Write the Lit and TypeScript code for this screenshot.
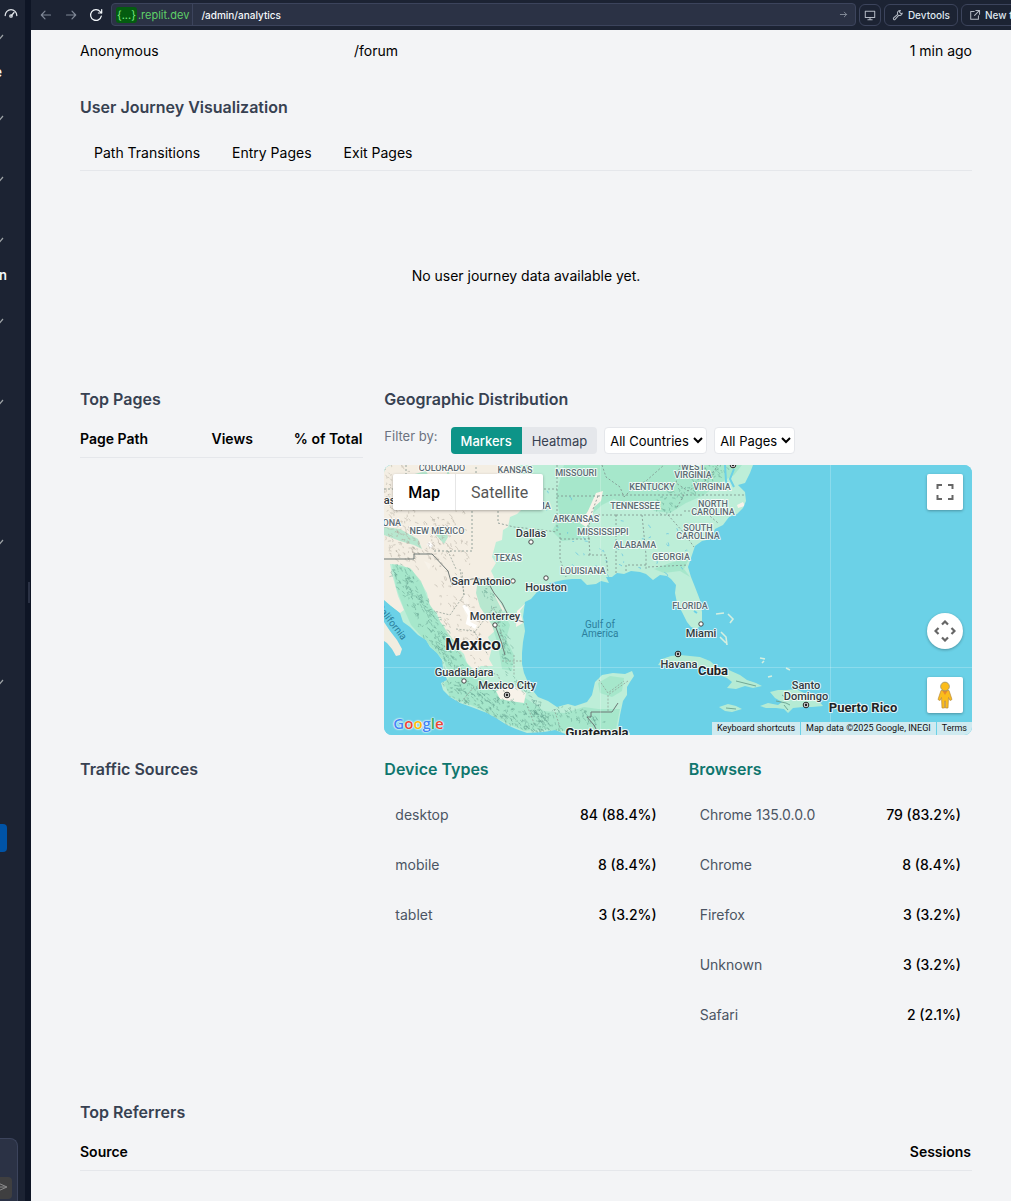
import { LitElement, html, css, svg } from "lit";
import { customElement, property, state } from "lit/decorators.js";
import { classMap } from "lit/directives/class-map.js";

/* ---------- map data ---------- */

type Kind = "state" | "city" | "country" | "water";
interface Label { x: number; y: number; t: string; k: Kind; r?: number }

const LABELS: Label[] = [
  { x: 58, y: 6, t: "COLORADO", k: "state" },
  { x: 131, y: 8, t: "KANSAS", k: "state" },
  { x: 192, y: 11, t: "MISSOURI", k: "state" },
  { x: 309, y: 5, t: "WEST", k: "state" },
  { x: 309, y: 13, t: "VIRGINIA", k: "state" },
  { x: 268, y: 25, t: "KENTUCKY", k: "state" },
  { x: 328, y: 25, t: "VIRGINIA", k: "state" },
  { x: 251, y: 44, t: "TENNESSEE", k: "state" },
  { x: 329, y: 42, t: "NORTH", k: "state" },
  { x: 329, y: 50, t: "CAROLINA", k: "state" },
  { x: 142, y: 44, t: "OKLAHOMA", k: "state" },
  { x: 192, y: 57, t: "ARKANSAS", k: "state" },
  { x: 314, y: 66, t: "SOUTH", k: "state" },
  { x: 314, y: 74, t: "CAROLINA", k: "state" },
  { x: -2, y: 61, t: "ARIZONA", k: "state" },
  { x: 53, y: 69, t: "NEW MEXICO", k: "state" },
  { x: 219, y: 70, t: "MISSISSIPPI", k: "state" },
  { x: 251, y: 83, t: "ALABAMA", k: "state" },
  { x: 287, y: 95, t: "GEORGIA", k: "state" },
  { x: 124, y: 96, t: "TEXAS", k: "state" },
  { x: 199, y: 109, t: "LOUISIANA", k: "state" },
  { x: 306, y: 144, t: "FLORIDA", k: "state" },
  { x: -14, y: 39, t: "Las Vegas", k: "city" },
  { x: 147, y: 72, t: "Dallas", k: "city" },
  { x: 97, y: 120, t: "San Antonio", k: "city" },
  { x: 162, y: 126, t: "Houston", k: "city" },
  { x: 111, y: 155, t: "Monterrey", k: "city" },
  { x: 317, y: 172, t: "Miami", k: "city" },
  { x: 295, y: 203, t: "Havana", k: "city" },
  { x: 80, y: 211, t: "Guadalajara", k: "city" },
  { x: 123, y: 224, t: "Mexico City", k: "city" },
  { x: 422, y: 224, t: "Santo", k: "city" },
  { x: 422, y: 235, t: "Domingo", k: "city" },
  { x: 89, y: 185, t: "Mexico", k: "country" },
  { x: 329, y: 210, t: "Cuba", k: "country" },
  { x: 479, y: 247, t: "Puerto Rico", k: "country" },
  { x: 213, y: 272, t: "Guatemala", k: "country" },
  { x: 216, y: 163, t: "Gulf of", k: "water" },
  { x: 216, y: 172, t: "America", k: "water" },
  { x: -5, y: 146, t: "Gulf of California", k: "water", r: 52 },
];

const TOWNS = [[147, 77], [129, 116], [162, 113], [111, 160], [317, 159], [80, 216]];
const CAPITALS = [[123, 230], [294, 189], [422, 240], [349, 0]];

const LAND =
  "M0 0H369L366 8 361 18 354 20 361 27 362 36 359 43 353 49 345 52 339 60 331 64 327 74 318 76 311 81 308 90 304 102 307 112 311 122 316 135 318 147 318 160 312 164 307 162 303 157 298 147 293 138 291 128 292 120 287 114 283 111 276 110 269 115 262 109 256 107 247 106 240 109 233 108 228 112 222 112 225 118 217 116 212 119 203 120 197 114 188 114 179 115 166 118 160 123 153 127 147 134 141 137 139 152 141 166 139 177 138 188 138 199 140 208 146 222 154 232 164 236 173 242 184 239 191 241 203 237 208 230 211 217 218 210 229 208 241 209 248 206 250 211 246 217 243 222 243 230 239 236 236 250 234 262 246 268 246 270H184L171 265 160 267 143 268 132 264 123 260 112 253 103 248 90 243 76 238 66 232 59 225 57 218 63 215 59 204 58 195 53 188 46 182 42 175 34 170 26 162 19 157 16 148 7 141 0 135Z";
const ARID =
  "M0 0H132L137 14 142 22 140 42 133 49 126 52 124 62 119 65 118 75 112 77 108 92 112 98 107 106 110 112 106 123 113 133 120 144 118 151 109 152 112 165 104 172 108 183 105 194 109 201 97 201 90 205 83 198 80 189 73 182 70 175 63 171 60 161 56 157 53 148 46 141 43 128 38 119 32 111 28 105 17 100 6 99 8 109 11 120 14 131 20 145 16 148 7 141 0 135Z";
const DEEP = [
  "M180 0H300L330 0 358 0 350 10 336 18 320 30 302 38 286 48 270 46 262 36 244 40 230 34 218 40 205 52 196 74 178 76 168 66 176 52 172 30Z",
  "M8 99 26 103 37 116 45 138 57 158 70 176 82 197 93 212 112 222 130 226 146 236 160 246 180 248 200 242 214 244 236 244 232 264 214 268 180 266 158 264 140 266 118 256 92 242 66 232 60 218 66 212 60 196 46 181 27 160 20 144 12 122Z",
  "M94 115 106 112 108 125 118 145 126 160 122 174 130 190 128 206 118 204 114 180 108 160 96 142 92 128Z",
  "M27 10 42 6 48 16 60 20 64 4 68 18 58 30 44 22Z",
  "M0 62 16 64 34 74 38 84 30 80 16 76 0 70Z",
  "M52 70 60 62 64 72 60 79Z",
  "M214 218 226 211 240 213 238 226 228 232 216 228Z",
  "M236 118 252 108 262 112 250 116ZM306 92 300 104 306 112 296 106 280 108 270 104 286 98Z",
];
const SAND = [
  "M212 28 219 26 217 36 210 42 208 54 202 62 196 58 204 46Z",
  "M40 96 47 99 45 105ZM80 130 84 130 86 148 96 152 92 166 86 160 80 146Z",
  "M112 226 128 220 142 228 140 238 126 236 116 234Z",
  "M353 40 359 37 361 41 354 43Z",
  "M142 138 136 146 139 158 132 162 133 146Z",
];
const BAJA = "M0 157 6 166 13 175 18 184 16 190 12 191 8 184 3 178 0 176Z";
const ISLANDS = [
  "M274 200 278 194 287 191 296 190 316 192 326 196 333 202 339 202 347 206 356 210 363 215 372 218 378 221 369 223 361 221 352 224 343 223 348 217 343 213 333 209 322 203 306 200 297 197 289 202 281 201Z",
  "M376 241 384 238 394 240 398 237 391 233 386 227 394 225 403 225 412 224 420 228 429 228 434 235 439 241 428 242 419 242 409 243 404 248 400 244 392 243 382 243Z",
  "M335 242 344 239 352 241 358 244 348 247 341 246Z",
  "M450 243 462 240 474 243 464 246Z",
];
const CAYS = "M332 149 340 148M344 149 349 154 346 158M337 167 342 172 343 180M336 172 342 178M376 193 381 194M378 198 380 196M384 212 388 211M402 203 406 205";

const STATE_LINES =
  "M0 24H22M22 0V38M22 22H92V0M92 24H173M88 22V86H50V88M114 26V58L130 62 150 64 173 67M92 26H114M173 0V24 67M173 31H214M176 68V94L182 112M176 74H206M218 0 222 12 236 22 240 32 M214 31 230 30 300 30H362M240 32 250 22 262 16 280 0M214 31 206 52 204 74M206 90 204 60M232 50V108M232 50H214M258 50 262 90V104M232 50H300M262 100H242V108M264 102 304 100M284 50 300 68 310 82M300 46 320 46 334 58M300 30 292 44M296 0 292 18 304 26 324 14 334 0M204 90H222L224 108";
const MEX_LINES =
  "M64 86 72 104M76 104 80 130 66 150 50 146M80 130 78 106M110 142 90 168M112 150 120 178M118 196 138 196M72 164 90 166 104 190M96 204 114 210 122 232M130 190V210M170 244 176 262M213 212 224 228 240 216M244 216 224 230 224 246M142 238 150 258M90 222 78 236";
const BORDER = "M0 94H30V89H48L64 106 68 120 88 114H102L110 128 118 138 124 150 136 156 144 158M234 238 228 247H207V252H203L210 260 214 268M111 160 117 176 121 190";

/* Small seeded generator, so the relief hatching is the same on every render. */
function hatch(seed: number, n: number, spine: number[][], spread: number): string {
  let s = seed;
  const rnd = () => ((s = (s * 16807) % 2147483647) / 2147483647);
  let d = "";
  for (let i = 0; i < n; i++) {
    const k = Math.floor(rnd() * (spine.length - 1));
    const f = rnd();
    const x = spine[k][0] + (spine[k + 1][0] - spine[k][0]) * f + (rnd() - 0.5) * spread;
    const y = spine[k][1] + (spine[k + 1][1] - spine[k][1]) * f + (rnd() - 0.5) * spread;
    d += `M${x.toFixed(1)} ${y.toFixed(1)}l${(rnd() * 3).toFixed(1)} ${(rnd() * 4 - 1).toFixed(1)}l${(rnd() * 2 - 1).toFixed(1)} ${(rnd() * 2).toFixed(1)}`;
  }
  return d;
}
const RIDGES =
  hatch(7, 230, [[14, 104], [30, 130], [50, 165], [70, 200]], 19) +
  hatch(19, 300, [[66, 222], [100, 236], [140, 254], [168, 256]], 22) +
  hatch(31, 110, [[100, 118], [112, 150], [122, 180], [120, 200], [148, 236], [160, 256]], 9) +
  hatch(43, 90, [[270, 45], [310, 20], [340, 0]], 15) +
  hatch(51, 50, [[170, 246], [200, 250], [215, 262]], 12);
const DUST =
  hatch(77, 190, [[6, 10], [20, 40], [10, 80], [50, 90]], 28) +
  hatch(83, 150, [[36, 80], [66, 60], [70, 130], [90, 190]], 36);
const RIVERS = hatch(91, 40, [[160, 30], [200, 90], [260, 80], [300, 90]], 50);

@customElement("geo-map")
class GeoMap extends LitElement {
  @state() private layer = "Map";

  static styles = css`
    :host { display: block; }
    .map { position: relative; height: 270px; overflow: hidden; border-radius: 8px; background: #6bd1e7; font-family: Roboto, sans-serif; }
    .art { display: block; width: 100%; height: 100%; }
    .state { font: 500 9px Roboto, sans-serif; fill: #5c6b73; }
    .city { font: 500 11px Roboto, sans-serif; fill: #333a40; }
    .country { font: 700 13px Roboto, sans-serif; fill: #1d2226; }
    .water { font: 400 10px Roboto, sans-serif; fill: #2b7f9c; }
    .halo { paint-order: stroke; stroke: #fff; stroke-width: 2; stroke-opacity: 0.8; stroke-linejoin: round; }
    .mexico { font-size: 17px; }
    .types { position: absolute; left: 9px; top: 9px; display: flex; background: #fff; border-radius: 2px; box-shadow: 0 1px 3px rgba(0, 0, 0, 0.3); }
    .type { height: 36px; padding: 0 15px; border: 0; background: none; color: #565656; font: 400 16px Roboto, sans-serif; }
    .type + .type { border-left: 1px solid #e6e6e6; }
    .type.on { color: #000; font-weight: 500; }
    .ctl { position: absolute; right: 9px; width: 36px; height: 36px; padding: 0; border: 0; border-radius: 2px; background: #fff; display: grid; place-items: center; box-shadow: 0 1px 3px rgba(0, 0, 0, 0.3); }
    .full { top: 9px; }
    .pan { bottom: 86px; border-radius: 50%; }
    .man { bottom: 22px; }
    .legal { position: absolute; right: 0; bottom: 0; display: flex; gap: 1px; font-size: 9px; line-height: 13px; color: #111; }
    .legal > * { padding: 0 5px; background: rgba(232, 240, 242, 0.8); color: inherit; text-decoration: none; border: 0; font: inherit; }
    .google { position: absolute; left: 9px; bottom: 1px; font: 600 15px/22px "Open Sans", sans-serif; text-decoration: none; text-shadow: 0 0 1px #fff, 0 0 2px #fff, 0 0 2px #fff; }
    .b { color: #4285f4; } .r { color: #ea4335; } .y { color: #fbbc04; } .g { color: #34a853; }
  `;

  private label(l: Label) {
    const cls = `${l.k}${l.k === "water" ? "" : " halo"}${l.t === "Mexico" ? " mexico" : ""}`;
    return svg`<text class=${cls} x=${l.x} y=${l.y} text-anchor="middle"
      transform=${`rotate(${l.r ?? 0} ${l.x} ${l.y})`}>${l.t}</text>`;
  }

  render() {
    return html`<div class="map">
      <svg class="art" viewBox="0 0 588 270" preserveAspectRatio="xMinYMin slice" role="img" aria-label="Map">
        <defs><clipPath id="land"><path d=${LAND}></path></clipPath></defs>
        <rect width="588" height="270" fill="#6bd1e7"></rect>
        <path d=${LAND} fill="#bdeed8"></path>
        <g clip-path="url(#land)">
          <path d=${ARID} fill="#f4eee3"></path>
          ${DEEP.map((d) => svg`<path d=${d} fill="#9ce4c6" fill-opacity="0.7"></path>`)}
          ${SAND.map((d) => svg`<path d=${d} fill="#f7f2e9"></path>`)}
          <path d="M80 140 86 150 84 158 92 162M44 78 48 82" stroke="#fff" stroke-width="4" fill="none"></path>
          <path d=${DUST} stroke="#b3aca0" stroke-width="0.5" fill="none"></path>
          <path d=${RIDGES} stroke="#5f9a8a" stroke-width="0.6" stroke-opacity="0.7" fill="none"></path>
          <path d=${RIVERS} stroke="#62c3e2" stroke-width="0.7" fill="none"></path>
          <path d=${STATE_LINES} stroke="#7d8f8b" stroke-width="0.8" stroke-dasharray="2 2" fill="none"></path>
          <path d=${MEX_LINES} stroke="#8c9a90" stroke-width="0.7" stroke-dasharray="2 1.5" fill="none"></path>
          <path d=${BORDER} stroke="#6d7775" stroke-width="1" fill="none"></path>
          <path d="M341 0 342 16 344 22M350 4 346 14 350 22 M310 146 313 148" stroke="#6bd1e7" stroke-width="2" fill="none"></path>
        </g>
        <path d=${BAJA} fill="#f1ede0"></path>
        ${ISLANDS.map((d) => svg`<path d=${d} fill="#b5ebd4"></path>`)}
        <path d="M352 216 372 221M392 236 402 238 406 240M398 230 404 234M400 240 404 245M342 243 352 244" stroke="#6aa08f" stroke-width="0.9" fill="none"></path>
        <path d=${CAYS} stroke="#d5efe0" stroke-width="1.6" fill="none"></path>
        <path d="M216.500 0V270M446.500 0V270M0 202.500H588" stroke="#fff" stroke-opacity="0.22" fill="none"></path>
        ${TOWNS.map(([x, y]) => svg`<circle cx=${x} cy=${y} r="2.200" fill="#fff" stroke="#444" stroke-width="1"></circle>`)}
        ${CAPITALS.map(([x, y]) => svg`<circle cx=${x} cy=${y} r="2.800" fill="#fff" stroke="#222" stroke-width="1"></circle><circle cx=${x} cy=${y} r="1.400" fill="#222"></circle>`)}
        ${LABELS.map((l) => this.label(l))}
      </svg>
      <div class="types">
        ${["Map", "Satellite"].map((t) => html`<button class=${classMap({ type: true, on: this.layer === t })} @click=${() => (this.layer = t)}>${t}</button>`)}
      </div>
      <button class="ctl full" aria-label="Toggle fullscreen view">
        <svg width="18" height="18" viewBox="0 0 18 18"><path d="M1.500 6V2H6M12 2h4.500V6M16.500 12v4H12M6 16H1.500V12" fill="none" stroke="#666" stroke-width="2"></path></svg>
      </button>
      <button class="ctl pan" aria-label="Map camera controls">
        <svg width="22" height="22" viewBox="0 0 22 22"><path d="M8 4.500 11 1.500 14 4.500M8 17.500 11 20.500 14 17.500M4.500 8 1.500 11 4.500 14M17.500 8 20.500 11 17.500 14" fill="none" stroke="#666" stroke-width="2.200"></path></svg>
      </button>
      <button class="ctl man" aria-label="Drag Pegman onto the map to open Street View">
        <svg width="16" height="28" viewBox="0 0 16 28"><path d="M4 9.500h8l3 9-2 1-1.500-3-.5 10.500H8.500V20h-1v7H5L4.500 16.500 3 19.500l-2-1z" fill="#fbbc1b" stroke="#b88a3c" stroke-width="0.7"></path><path d="M5.500 10h5L8 14z" fill="#e8892c"></path><circle cx="8" cy="5.500" r="4.400" fill="#fbbc1b" stroke="#8a8a7a" stroke-width="0.7"></circle></svg>
      </button>
      <a class="google" href="#" aria-label="Google"><span class="b">G</span><span class="r">o</span><span class="y">o</span><span class="b">g</span><span class="g">l</span><span class="r">e</span></a>
      <div class="legal"><button>Keyboard shortcuts</button><span>Map data ©2025 Google, INEGI</span><a href="#">Terms</a></div>
    </div>`;
  }
}

/* ---------- key / value list ---------- */

@customElement("stat-list")
class StatList extends LitElement {
  @property() heading = "";
  @property({ attribute: false }) rows: string[][] = [];

  static styles = css`
    :host { display: block; }
    .title { margin: 0 0 24px; font-size: 16px; line-height: 24px; font-weight: 600; color: #0f766e; }
    .list { margin: 0; padding: 0 11px; display: grid; gap: 30px; }
    .row { display: flex; justify-content: space-between; font-size: 14px; line-height: 20px; }
    .name { color: #4b5563; }
    .value { margin: 0; font-weight: 500; color: #000; }
  `;

  render() {
    return html`<h3 class="title">${this.heading}</h3>
      <dl class="list">${this.rows.map(([n, v]) => html`<div class="row"><dt class="name">${n}</dt><dd class="value">${v}</dd></div>`)}</dl>`;
  }
}

/* ---------- shell ---------- */

const GROUPS = [["mid", "e"], ["low", ""], ["low", ""], ["mid", "n"], ["mid", ""], ["tall", ""], ["tall", ""], ["tall", ""]];

@customElement("app-root")
class AppRoot extends LitElement {
  @state() private mode = "Markers";

  static styles = css`
    :host { display: block; font-family: Inter, "Liberation Sans", sans-serif; font-size: 14px; line-height: 20px; color: #000; }
    * { box-sizing: border-box; }
    .shell { display: grid; grid-template-columns: 25px 6px minmax(0, 1fr); min-height: 100vh; background: #0e1525; overflow: hidden; }
    .side { display: flex; flex-direction: column; background: #1c2333; color: #f5f9fc; overflow: hidden; }
    .gauge { display: block; margin: 6px 0 0 4px; }
    .group { padding-top: 9px; }
    .low { height: 61px; } .mid { height: 81px; } .tall { height: 140px; }
    .chev { display: block; margin-left: -6px; }
    .word { display: block; width: 7px; margin-top: 21px; direction: rtl; font: 600 13px/16px Inter, sans-serif; }
    .narrow { width: 2px; overflow: hidden; }
    .primary { width: 7px; height: 28px; margin-top: 17px; padding: 0; border: 0; border-radius: 0 4px 4px 0; background: #0053a6; }
    .composer { width: 18px; height: 63px; margin-top: auto; padding: 38px 5px 0 0; border: 1px solid #3c445c; border-width: 1px 1px 0 0; border-radius: 0 8px 0 0; background: #2b3245; }
    .send { display: block; width: 12px; height: 22px; padding: 0; border: 0; border-radius: 0 4px 4px 0; background: #3f3f40; }
    .grip { align-self: start; justify-self: end; width: 2px; height: 21px; margin: 582px 1px 0 0; background: #2b3245; }

    .bar { display: flex; align-items: center; height: 30px; padding: 0 0 1px 2px; background: #1c2333; font-size: 11px; line-height: 16px; overflow: hidden; }
    .nav { width: 25px; height: 22px; padding: 0; border: 0; background: none; display: grid; place-items: center; flex: none; }
    .url { display: flex; flex: 1; align-items: center; min-width: 0; height: 23px; margin: 0 3px; border: 1px solid #3c445c; border-radius: 4px; background: #2b3245; }
    .host { display: flex; align-items: center; height: 100%; padding: 0 3px 0 4px; color: #5fd068; border-right: 1px solid #3c445c; }
    .chip { margin-right: 1px; padding: 0 1px; border-radius: 3px; background: #045c10; color: #7be882; }
    .path { flex: 1; min-width: 0; padding: 0 8px; border: 0; background: none; color: #f5f9fc; font: 500 10px/16px Inter, sans-serif; }
    .go { width: 22px; height: 20px; padding: 0; border: 0; background: none; display: grid; place-items: center; }
    .tool { display: flex; align-items: center; gap: 4px; flex: none; height: 22px; margin-right: 3px; padding: 0 7px; border: 1px solid #3c445c; border-radius: 6px; background: none; color: #dfe5ee; font: 500 10px/16px Inter, sans-serif; white-space: nowrap; }
    .square { width: 22px; padding: 0; justify-content: center; }
    .cut { width: 50px; flex: none; overflow: hidden; }

    .main { display: flex; flex-direction: column; min-width: 0; background: #f3f4f6; }
    .page { padding: 11px 39px 30px 49px; }
    table { width: 100%; border-collapse: collapse; table-layout: auto; }
    td, th { padding: 0; text-align: left; font-weight: 400; }
    .first { width: 274px; }
    .end { text-align: right; }
    .data .end { padding-right: 1px; }
    .title { margin: 0; font-size: 16px; line-height: 24px; font-weight: 600; color: #374151; }
    .journey { margin-top: 34px; }
    .tabs { display: flex; gap: 4px; margin-top: 16px; border-bottom: 1px solid #e5e7eb; }
    .tab { height: 35px; padding: 0 14px; border: 0; background: none; color: #000; font: 400 14px/20px Inter, sans-serif; }
    .empty { margin: 95px 0 101px; text-align: center; }
    .grid { display: grid; grid-template-columns: repeat(3, minmax(0, 1fr)); column-gap: 21px; row-gap: 22px; }
    .wide { grid-column: span 2; }
    .data { margin-top: 18px; border-bottom: 1px solid #e5e7eb; }
    .data th { font-weight: 600; padding-bottom: 8px; }
    .filters { display: flex; align-items: flex-start; gap: 7px; margin: 16px 0 11px; font-size: 13px; line-height: 18px; }
    .by { margin-right: 6px; color: #6b7280; }
    .seg { display: flex; height: 27px; border-radius: 4px; overflow: hidden; }
    .opt { padding: 0 10px; border: 0; background: #e5e7eb; color: #374151; font: 400 13px/18px Inter, sans-serif; }
    .on { background: #0d9488; color: #fff; font-weight: 500; }
    select { height: 27px; padding: 0 1px; border: 1px solid #e5e7eb; border-radius: 4px; background: #fff; color: #000; font: 400 13px/18px Inter, sans-serif; }
    .referrers { margin-top: 75px; }
  `;

  private icon(d: string, size = 14, color = "#9da2a6", width = 1.2) {
    return html`<svg width=${size} height=${size} viewBox="0 0 14 14" fill="none" stroke=${color} stroke-width=${width} stroke-linecap="round" stroke-linejoin="round"><path d=${d}></path></svg>`;
  }

  render() {
    return html`<div class="shell">
      <aside class="side">
        <svg class="gauge" width="14" height="16" viewBox="0 0 14 16" fill="none" stroke="#dfe3e8" stroke-width="1.300" stroke-linecap="round"><path d="M1.200 9.500A5.800 5.800 0 0 1 12.800 9.500M7.500 9.500 10 6.500"></path><circle cx="7" cy="10" r="1.200"></circle></svg>
        ${GROUPS.map(([size, word]) => html`<div class="group ${size}">
          <svg class="chev" width="12" height="12" viewBox="0 0 12 12" fill="none" stroke="#9da2a6" stroke-width="1.200"><path d="M3 4 6 7.500 9 4"></path></svg>
          ${word ? html`<span class=${classMap({ word: true, narrow: word === "e" })}>${word}</span>` : ""}
        </div>`)}
        <button class="primary" aria-label="Open"></button>
        <div class="composer"><button class="send" aria-label="Send"><svg width="12" height="12" viewBox="0 0 12 12" fill="none" stroke="#8d8d8d"><path d="M-2 2 7 6-2 10M0 6H6"></path></svg></button></div>
      </aside>
      <div class="grip"></div>
      <div class="main">
        <header class="bar">
          <button class="nav" aria-label="Back">${this.icon("M11.500 7H2.500M6 3.200 2.300 7 6 10.800", 14, "#7f8796")}</button>
          <button class="nav" aria-label="Forward">${this.icon("M2.500 7H11.500M8 3.200 11.700 7 8 10.800", 14, "#7f8796")}</button>
          <button class="nav" aria-label="Reload">${this.icon("M12.300 8.200A5.400 5.400 0 1 1 11.200 3.600L12.600 5M12.700 1.600V5H9.400", 14, "#f5f9fc")}</button>
          <div class="url">
            <span class="host"><span class="chip">{...}</span>.replit.dev</span>
            <input class="path" aria-label="Path" value="/admin/analytics" />
            <button class="go" aria-label="Go">${this.icon("M3 7H11M8 4 11 7 8 10", 11, "#858c9a")}</button>
          </div>
          <button class="tool square" aria-label="Screen size">${this.icon("M1.500 2.500H12.500V10H1.500ZM7 10V12.500M4.500 12.500H9.500", 12, "#b4bac4")}</button>
          <button class="tool">${this.icon("M12 4.800A3.200 3.200 0 0 1 7.800 7.400L3.600 12.200A1.300 1.300 0 0 1 1.800 10.400L6.600 6.200A3.200 3.200 0 0 1 9.900 1.700L8.600 3.500 10.400 5.400Z", 12, "#b4bac4")}Devtools</button>
          <span class="cut"><button class="tool">${this.icon("M6 3H2V12H11V8M8 1.800H12.300V6M12 2 6.500 7.500", 12, "#b4bac4")}New tab</button></span>
        </header>
        <main class="page">
          <table aria-label="Recent visits"><tbody><tr><td class="first">Anonymous</td><td>/forum</td><td class="end">1 min ago</td></tr></tbody></table>

          <section class="journey">
            <h3 class="title">User Journey Visualization</h3>
            <nav class="tabs">${["Path Transitions", "Entry Pages", "Exit Pages"].map((t) => html`<button class="tab">${t}</button>`)}</nav>
            <p class="empty">No user journey data available yet.</p>
          </section>

          <div class="grid">
            <section>
              <h3 class="title">Top Pages</h3>
              <table class="data"><thead><tr><th>Page Path</th><th class="end">Views</th><th class="end">% of Total</th></tr></thead></table>
            </section>
            <section class="wide">
              <h3 class="title">Geographic Distribution</h3>
              <div class="filters">
                <span class="by">Filter by:</span>
                <div class="seg">${["Markers", "Heatmap"].map((m) => html`<button class=${classMap({ opt: true, on: this.mode === m })} @click=${() => (this.mode = m)}>${m}</button>`)}</div>
                <select aria-label="Country"><option>All Countries</option></select>
                <select aria-label="Page"><option>All Pages</option></select>
              </div>
              <geo-map></geo-map>
            </section>
            <section><h3 class="title">Traffic Sources</h3></section>
            <stat-list heading="Device Types" .rows=${[["desktop", "84 (88.4%)"], ["mobile", "8 (8.4%)"], ["tablet", "3 (3.2%)"]]}></stat-list>
            <stat-list heading="Browsers" .rows=${[["Chrome 135.0.0.0", "79 (83.2%)"], ["Chrome", "8 (8.4%)"], ["Firefox", "3 (3.2%)"], ["Unknown", "3 (3.2%)"], ["Safari", "2 (2.1%)"]]}></stat-list>
          </div>

          <section class="referrers">
            <h3 class="title">Top Referrers</h3>
            <table class="data"><thead><tr><th>Source</th><th class="end">Sessions</th></tr></thead></table>
          </section>
        </main>
      </div>
    </div>`;
  }
}
